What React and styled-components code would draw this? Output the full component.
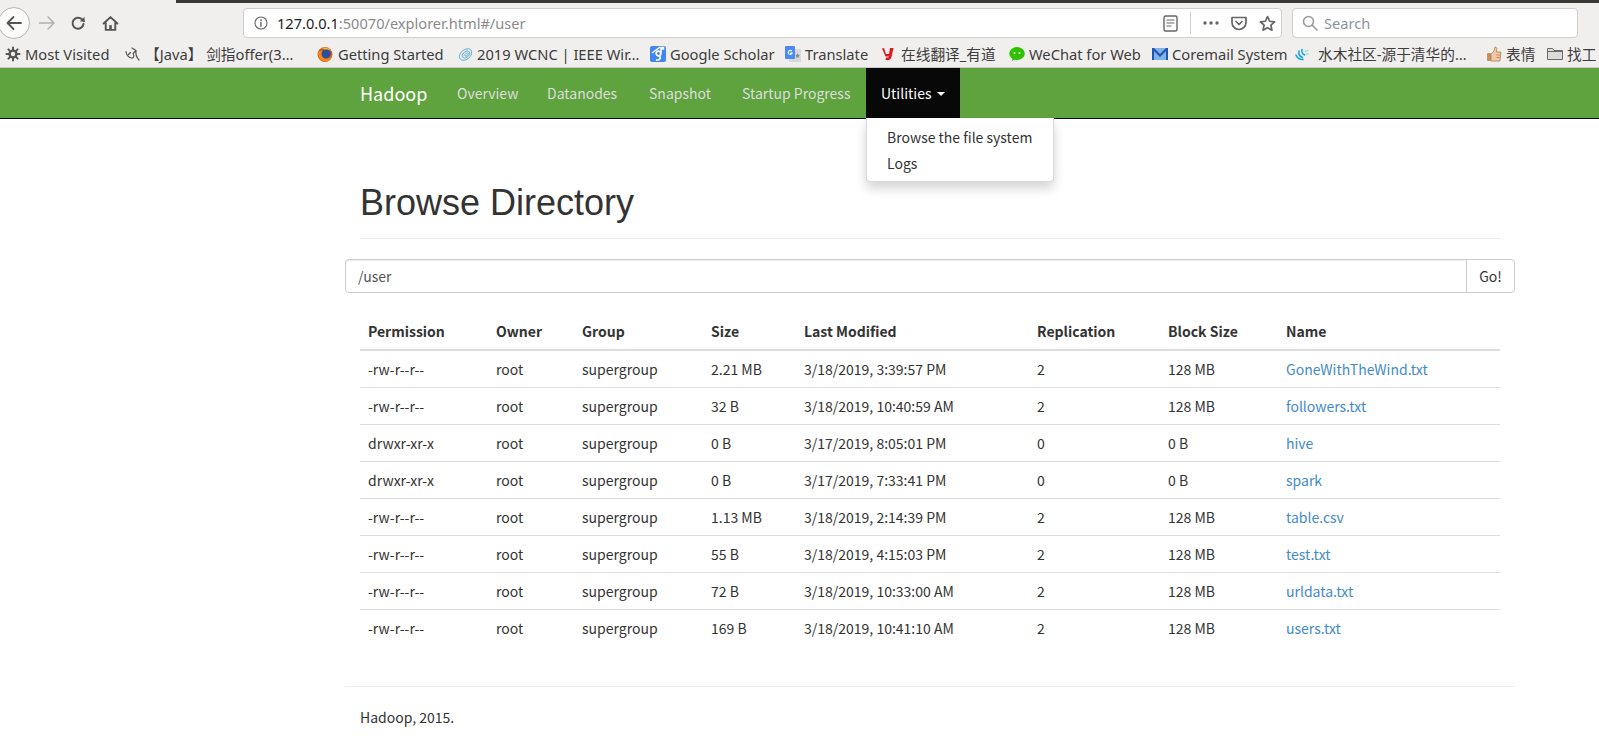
import React from "react";
import styled, { createGlobalStyle } from "styled-components";

const Global = createGlobalStyle`
  html, body { margin: 0; padding: 0; background: #fff; }
  body { font-family: "Noto Sans CJK SC", "Noto Sans", sans-serif; font-size: 14px; line-height: 20px; color: #333; overflow: hidden; }
  * { box-sizing: border-box; }
`;

const Page = styled.div`width: 1599px; height: 752px; overflow: hidden;`;
const Chrome = styled.header`background: #f0efed; height: 68px; border-bottom: 1px solid #c9c8c5; color: #3f3f3f;`;
const TabStrip = styled.div`height: 3px; padding-left: 176px;`;
const TabEdge = styled.div`height: 3px; background: #3b3935;`;
const Toolbar = styled.div`height: 40px; display: flex; align-items: center; position: relative; padding-left: 34px;`;
const BackCircle = styled.div`
  position: absolute; left: -2px; top: 4px; width: 32px; height: 32px; border-radius: 50%;
  background: #fbfbfa; border: 1px solid #b5b4b1; display: flex; align-items: center; justify-content: center; color: #555;
`;
const NavIcon = styled.span`flex: none; width: ${p => p.$w}px; display: flex; justify-content: center; color: ${p => p.$c || "#555"};`;
const Field = styled.div`
  flex: none; height: 30px; background: #fff; border: 1px solid #cfcecb; border-radius: 4px; display: flex; align-items: center;
  width: ${p => p.$w}px; margin-left: ${p => p.$m}px; padding-left: ${p => p.$p}px;
  font-family: "Noto Sans", sans-serif; font-size: 14.6px;
`;
const UrlText = styled.span`margin-left: 9px; margin-right: 106px; color: #8a8a8a; width: 780px; white-space: nowrap;`;
const UrlHost = styled.span`color: #222;`;
const Sep = styled.span`width: 1px; height: 22px; background: #cfcecb; margin: 0 12px 0 12px;`;
const UrlIcons = styled.span`display: flex; align-items: center; gap: 12px; color: #666;`;
const SearchPh = styled.span`margin-left: 6px; color: #8d93a0;`;

const Bookmarks = styled.nav`
  height: 22px; display: flex; align-items: center; padding-left: 5px; overflow: hidden; white-space: nowrap;
  font-family: "Noto Sans", "Noto Sans CJK SC", sans-serif; font-size: 14.7px;
`;
const Mark = styled.span`flex: none; display: flex; align-items: center; gap: ${p => p.$gap || 4}px; width: ${p => p.$w}px; color: #3d3d3d; overflow: hidden;`;
const MarkIcon = styled.span`flex: none; width: 16px; height: 16px; display: flex; align-items: center; justify-content: center;`;

const Navbar = styled.div`height: 51px; background: #5fa33e; border-bottom: 1px solid #0b0b0b;`;
const NavInner = styled.div`margin-left: 345px; width: 1170px; display: flex; align-items: stretch; height: 50px;`;
const Brand = styled.a`width: 97px; padding: 15px; font-size: 18px; color: #fff; line-height: 20px; white-space: nowrap;`;
const NavItem = styled.div`position: relative; display: flex; width: ${p => p.$w}px;`;
const NavLink = styled.a`
  flex: 1; padding: 15px; line-height: 20px; color: ${p => (p.$active ? "#fff" : "#ddd")}; background: ${p => (p.$active ? "#080808" : "transparent")};
  display: flex; align-items: flex-start; white-space: nowrap;
`;
const Caret = styled.span`
  width: 0; height: 0; margin: 9px 0 0 6px; border-top: 4px solid #fff; border-left: 4px solid transparent; border-right: 4px solid transparent;
`;
const Menu = styled.ul`
  position: absolute; top: 50px; left: 0; width: 188px; height: 64px; margin: 0; padding: 6px 0 5px; list-style: none; background: #fff;
  border: 1px solid rgba(0,0,0,.15); border-top: 0; border-radius: 0 0 4px 4px; box-shadow: 0 6px 12px rgba(0,0,0,.175);
`;
const MenuItem = styled.li`padding: 3px 20px; line-height: 20px; color: #333; white-space: nowrap;`;

const Container = styled.main`margin-left: 345px; width: 1170px;`;
const PageHeader = styled.div`margin: 0 15px 20px; padding: 64px 0 9px; border-bottom: 1px solid #eee;`;
const Title = styled.h1`margin: 0 0 6px; font-family: "Liberation Sans", Arial, sans-serif; font-size: 36px; font-weight: 500; line-height: 40px; color: #333;`;
const InputGroup = styled.div`display: flex; height: 34px; margin-bottom: 20px;`;
const PathInput = styled.div`
  flex: 1; border: 1px solid #ccc; border-radius: 4px 0 0 4px; padding: 6px 12px; color: #555;
  box-shadow: inset 0 1px 1px rgba(0,0,0,.075);
`;
const GoButton = styled.button`
  width: 49px; margin-left: -1px; border: 1px solid #ccc; border-radius: 0 4px 4px 0; background: #fff; color: #333;
  font: inherit; padding: 0;
`;
const Table = styled.table`margin: 0 15px; width: 1140px; table-layout: fixed; border-collapse: collapse;`;
const Col = styled.col`width: ${p => p.$w}px;`;
const Th = styled.th`padding: 8px; line-height: 20px; text-align: left; font-weight: 700; border-bottom: 2px solid #ddd;`;
const Td = styled.td`padding: 8px; line-height: 20px; border-top: 1px solid #ddd; white-space: nowrap;`;
const FileLink = styled.a`color: #428bca;`;
const Rule = styled.hr`margin: 40px 0 20px; border: 0; border-top: 1px solid #eee;`;
const Footer = styled.footer`padding: 0 15px;`;

const cols = [128, 86, 129, 93, 233, 131, 118, 222];
const heads = ["Permission", "Owner", "Group", "Size", "Last Modified", "Replication", "Block Size", "Name"];
const F = "-rw-r--r--", D = "drwxr-xr-x";
const rows = [
  [F, "2.21 MB", "3/18/2019, 3:39:57 PM", "2", "128 MB", "GoneWithTheWind.txt"],
  [F, "32 B", "3/18/2019, 10:40:59 AM", "2", "128 MB", "followers.txt"],
  [D, "0 B", "3/17/2019, 8:05:01 PM", "0", "0 B", "hive"],
  [D, "0 B", "3/17/2019, 7:33:41 PM", "0", "0 B", "spark"],
  [F, "1.13 MB", "3/18/2019, 2:14:39 PM", "2", "128 MB", "table.csv"],
  [F, "55 B", "3/18/2019, 4:15:03 PM", "2", "128 MB", "test.txt"],
  [F, "72 B", "3/18/2019, 10:33:00 AM", "2", "128 MB", "urldata.txt"],
  [F, "169 B", "3/18/2019, 10:41:10 AM", "2", "128 MB", "users.txt"],
];

const S = ({ children, w = 16, h = 16, vb = "0 0 16 16", ...r }) => (
  <svg width={w} height={h} viewBox={vb} fill="none" stroke="currentColor" strokeWidth="1.6" strokeLinecap="round" strokeLinejoin="round" {...r}>{children}</svg>
);

const icons = {
  gear: <S stroke="#555"><circle cx="8" cy="8" r="3.4" strokeWidth="2.4" /><path d="M8 1.500v2.500M8 12v2.500M1.500 8H4M12 8h2.500M3.400 3.400l1.800 1.800M10.800 10.800l1.800 1.800M12.600 3.400l-1.800 1.800M5.200 10.800l-1.800 1.800" strokeWidth="2" /></S>,
  om: <S stroke="#555" strokeWidth="1.200"><path d="M1 5.500c.5 4 3 6 5.500 6.500 2.500.3 3-2.500 1.500-4.500l2.500-2.500M7 2l4 2.500c-.5 3.500.5 7 3 9.500M3.500 8.500l2-2" /></S>,
  fox: <svg width="17" height="17" viewBox="0 0 16 16"><circle cx="8" cy="8" r="7.500" fill="#d9581a" /><circle cx="9" cy="7" r="4.800" fill="#2b4f9e" /><path d="M1 6c0 5 3 9 7.500 9 4 0 6.500-3 6.500-7-1 3-3 4.500-5.500 4.500C7 12.500 5 11 4.500 8.500c-.5-2 .5-3.500 2-4.500C4 4 2 5 1 6z" fill="#f08a1d" /><path d="M5 1.500c3-1.200 7-.2 9 3-2-1.500-4.500-2-6.500-1.300z" fill="#f9b81e" /></svg>,
  ieee: <S stroke="#5fb0d2" strokeWidth=".9" strokeLinecap="butt"><ellipse cx="8.500" cy="8.500" rx="7" ry="4.800" transform="rotate(-40 8.500 8.500)" /><ellipse cx="9" cy="8.500" rx="4.400" ry="2.800" transform="rotate(-40 9 8.500)" /><ellipse cx="9.500" cy="8.500" rx="2" ry="1.200" transform="rotate(-40 9.500 8.500)" /></S>,
  scholar: <svg width="16" height="16" viewBox="0 0 16 16"><rect width="16" height="16" rx="2" fill="#4285f4" /><path d="M2 7l7.500-5.500h4v1.500L11 3v4" stroke="#fff" strokeWidth="1.500" fill="none" /><circle cx="8.500" cy="7.500" r="2.300" fill="none" stroke="#fff" strokeWidth="1.700" /><path d="M9 10c2.500 1.300 1 4.500-3 4" stroke="#fff" strokeWidth="1.700" fill="none" /></svg>,
  translate: <svg width="16" height="16" viewBox="0 0 16 16"><rect x="4" y="3" width="12" height="13" fill="#d9d9d9" /><rect width="10" height="13" rx="1" fill="#4a8af4" /><path d="M6.800 5.200a2 2 0 1 0 .3 1.800H5.200" fill="none" stroke="#fff" strokeWidth="1.100" /><path d="M12.500 7l.8 1.800 1.700.2-1.300 1.200.4 1.800-1.600-1-1.600 1 .4-1.800L10.400 9l1.400-.2z" fill="#8a8a8a" /></svg>,
  youdao: <svg width="16" height="16" viewBox="0 0 16 16"><path d="M3 2l2 6h3l1-6h3.500l-2 9c-.5 2.500-2.500 3.500-6 3l.5-2.500c2 .2 2.700 0 3-1H4.500L1 2.500z" fill="#e1171e" /></svg>,
  wechat: <svg width="16" height="16" viewBox="0 0 16 16"><ellipse cx="8" cy="7.500" rx="7.800" ry="6.500" fill="#2dc100" /><path d="M3.500 11.500L3 15l4-2.500z" fill="#2dc100" /><circle cx="5.500" cy="7" r="1" fill="#fff" /><circle cx="10.500" cy="7" r="1" fill="#fff" /></svg>,
  mail: <svg width="16" height="16" viewBox="0 0 16 16"><rect y="2" width="16" height="12" fill="#7fb2e8" /><path d="M0 2h2l6 6 6-6h2v12h-2V5l-6 6-6-6v9H0z" fill="#1f55b0" /></svg>,
  water: <S stroke="#10a2e0" strokeWidth="1.500"><path d="M2 9c1 3 3 4.500 7 4.500M5 5c-.5 3 .5 5.500 3.500 6.500M8 3.500C7.500 6 8.500 8 10.500 9" /><path d="M11 5.500l3-1M11.500 8h3" stroke="#8fdcc0" strokeWidth="1" /></S>,
  thumb: <svg width="16" height="16" viewBox="0 0 16 16"><rect x="1" y="7" width="4" height="8" rx="1" fill="#c98f63" /><path d="M5 8l3-3 1-4c2 0 2 2 1.500 5H15l-1 9H5z" fill="#efc9a8" stroke="#a9744a" strokeWidth=".7" /><path d="M10.500 9h4M10.500 11.500h3.500" stroke="#a9744a" strokeWidth=".7" /></svg>,
  folder: <svg width="16" height="16" viewBox="0 0 16 16"><path d="M.5 13.500v-11h5l1.500 2h8.500v9z" fill="#dcdbd8" stroke="#6b6b6b" /><path d="M.5 5.500h15" stroke="#6b6b6b" /></svg>,
};

const marks = [
  ["gear", "Most Visited", 120],
  ["om", "【Java】 剑指offer(3…", 192],
  ["fox", "Getting Started", 140, 5],
  ["ieee", "2019 WCNC | IEEE Wir…", 193],
  ["scholar", "Google Scholar", 135],
  ["translate", "Translate", 96],
  ["youdao", "在线翻译_有道", 128],
  ["wechat", "WeChat for Web", 143],
  ["mail", "Coremail System", 142],
  ["water", "水木社区-源于清华的…", 192, 8],
  ["thumb", "表情", 61],
  ["folder", "找工", 60],
];

export default function App() {
  return (
    <Page>
      <Global />
      <Chrome>
        <TabStrip><TabEdge /></TabStrip>
        <Toolbar>
          <BackCircle><S w={18} h={18} vb="0 0 18 18" strokeWidth="1.800"><path d="M16 9H2.500M8.500 3L2.500 9l6 6" /></S></BackCircle>
          <NavIcon $w={26} $c="#b0b0b0"><S w={18} h={18} vb="0 0 18 18" strokeWidth="1.500"><path d="M1.500 9H16M10 3l6 6-6 6" /></S></NavIcon>
          <NavIcon $w={36}><S><path d="M13.500 9a5.500 5.500 0 1 1-1.600-4.700L14 6.200" strokeWidth="2" /><path d="M14.500 1.800v4.700H9.800" fill="currentColor" stroke="none" /></S></NavIcon>
          <NavIcon $w={28}><S w={17} h={17}><path d="M1.500 8L8 2l6.500 6M3.500 7v7h9V7" strokeWidth="1.800" /><rect x="6.800" y="9.500" width="2.400" height="4.500" fill="currentColor" stroke="none" /></S></NavIcon>
          <Field $w={1039} $m={119} $p={10}>
            <NavIcon $w={14} $c="#666"><S w={14} h={14} strokeWidth="1.100" vb="0 0 14 14"><circle cx="7" cy="7" r="6" /><path d="M7 6.200v4M7 3.800v.6" strokeWidth="1.400" /></S></NavIcon>
            <UrlText><UrlHost>127.0.0.1</UrlHost>:50070/explorer.html#/user</UrlText>
            <UrlIcons>
              <S w={15} h={17} vb="0 0 15 17" strokeWidth="1.400"><rect x="1" y="1" width="13" height="15" rx="1.500" /><path d="M4 5h7M4 8h7M4 11h4" strokeWidth="1.100" /></S>
            </UrlIcons>
            <Sep />
            <UrlIcons>
              <S w={16} h={4} vb="0 0 16 4" fill="currentColor" stroke="none"><circle cx="2" cy="2" r="1.700" /><circle cx="8" cy="2" r="1.700" /><circle cx="14" cy="2" r="1.700" /></S>
              <S strokeWidth="1.700"><path d="M1 2.500h14v5a7 7 0 0 1-14 0z" /><path d="M5 6.500l3 3 3-3" /></S>
              <S w={17} h={17} strokeWidth="1.600"><path d="M8 1.500l2 4.400 4.700.5-3.500 3.200 1 4.700L8 11.900l-4.200 2.400 1-4.700L1.300 6.400 6 5.900z" /></S>
            </UrlIcons>
          </Field>
          <Field $w={286} $m={10} $p={9}>
            <S w={16} h={16} stroke="#9a9a9a" strokeWidth="1.600"><circle cx="6.500" cy="6.500" r="5" /><path d="M10.300 10.300L15 15" /></S>
            <SearchPh>Search</SearchPh>
          </Field>
        </Toolbar>
        <Bookmarks>
          {marks.map(([k, t, w, g]) => (
            <Mark key={t} $w={w} $gap={g}><MarkIcon>{icons[k]}</MarkIcon>{t}</Mark>
          ))}
        </Bookmarks>
      </Chrome>
      <Navbar>
        <NavInner>
          <Brand>Hadoop</Brand>
          <NavItem $w={90}><NavLink>Overview</NavLink></NavItem>
          <NavItem $w={102}><NavLink>Datanodes</NavLink></NavItem>
          <NavItem $w={93}><NavLink>Snapshot</NavLink></NavItem>
          <NavItem $w={139}><NavLink>Startup Progress</NavLink></NavItem>
          <NavItem $w={94}>
            <NavLink $active>Utilities<Caret /></NavLink>
            <Menu>
              <MenuItem>Browse the file system</MenuItem>
              <MenuItem>Logs</MenuItem>
            </Menu>
          </NavItem>
        </NavInner>
      </Navbar>
      <Container>
        <PageHeader><Title>Browse Directory</Title></PageHeader>
        <InputGroup>
          <PathInput>/user</PathInput>
          <GoButton>Go!</GoButton>
        </InputGroup>
        <Table>
          <colgroup>{cols.map((w, i) => <Col key={i} $w={w} />)}</colgroup>
          <thead><tr>{heads.map(h => <Th key={h}>{h}</Th>)}</tr></thead>
          <tbody>
            {rows.map(r => (
              <tr key={r[5]}>
                <Td>{r[0]}</Td><Td>root</Td><Td>supergroup</Td><Td>{r[1]}</Td><Td>{r[2]}</Td><Td>{r[3]}</Td><Td>{r[4]}</Td>
                <Td><FileLink>{r[5]}</FileLink></Td>
              </tr>
            ))}
          </tbody>
        </Table>
        <Rule />
        <Footer>Hadoop, 2015.</Footer>
      </Container>
    </Page>
  );
}
